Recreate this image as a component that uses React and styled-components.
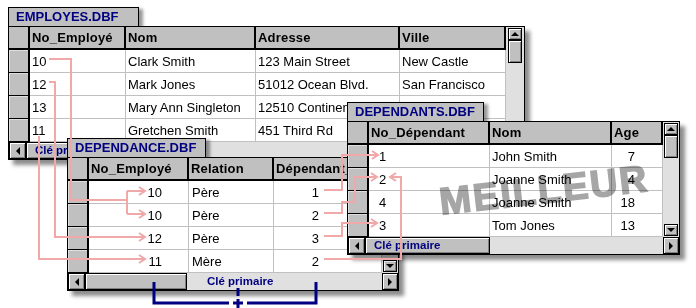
import React from 'react'
import styled, { createGlobalStyle } from 'styled-components'

const GlobalStyle = createGlobalStyle`
  *, *::before, *::after { box-sizing: border-box; }
  html, body { margin: 0; padding: 0; background: #fff; }
  body { font-family: "Liberation Sans", Arial, sans-serif; color: #000; }
`;

const Desk = styled.div`
  position: relative;
  width: 696px;
  height: 308px;
  overflow: hidden;
  background: #fff;
`;

const Win = styled.div`
  position: absolute;
  left: ${p => p.$x}px;
  top: ${p => p.$y}px;
  width: ${p => p.$w}px;
`;

const Tab = styled.div`
  width: ${p => p.$w}px;
  height: 19px;
  border: 1px solid #000;
  border-bottom: none;
  background: #c0c0c0;
  color: #000080;
  font-weight: bold;
  font-size: 13px;
  line-height: 18px;
  padding-left: 7px;
  white-space: nowrap;
  box-shadow: 4px 2px 3px rgba(0, 0, 0, 0.4);
`;

const Body = styled.div`
  position: relative;
  display: grid;
  grid-template-columns: ${p => p.$cols};
  grid-template-rows: repeat(5, 23px) 17px;
  border: 1px solid #000;
  background: #c0c0c0;
  box-shadow: 5px 5px 4px rgba(0, 0, 0, 0.45);
`;

const Corner = styled.div`
  background: #c0c0c0;
  border-right: 2px solid #000;
  border-bottom: 2px solid #000;
`;

const HeadCell = styled.div`
  display: flex;
  align-items: center;
  padding-left: 2px;
  background: #c0c0c0;
  border-right: 2px solid #000;
  border-bottom: 2px solid #000;
  font-weight: bold;
  font-size: 13px;
  letter-spacing: 0.2px;
  white-space: nowrap;
  overflow: hidden;
`;

const Selector = styled.div`
  background: #c0c0c0;
  border-right: 2px solid #000;
  border-bottom: 1px solid #000;
  box-shadow: inset 1px 1px 0 #dedede;
`;

const Cell = styled.div`
  display: flex;
  align-items: center;
  justify-content: ${p => (p.$right ? 'flex-end' : 'flex-start')};
  padding: ${p => (p.$right ? `0 ${p.$pad}px 0 0` : `0 0 0 ${p.$pad}px`)};
  background: #fff;
  border-right: 1px solid #c0c0c0;
  border-bottom: 1px solid #c0c0c0;
  font-size: 13px;
  white-space: nowrap;
  overflow: hidden;
`;

const VScroll = styled.div`
  grid-column: -2 / -1;
  grid-row: 1 / 6;
  display: flex;
  flex-direction: column;
  align-items: center;
  padding: 1px 0;
  background: #e0e0e0;
`;

const HScroll = styled.div`
  grid-column: 1 / -1;
  grid-row: 6;
  display: flex;
  align-items: stretch;
  background: #e0e0e0;
`;

const raised = `
  background: #c0c0c0;
  border: 1px solid #000;
  box-shadow: inset 1px 1px 0 #fff, inset -1px -1px 0 #808080;
`;

const tri = {
  up: 'border-left: 4px solid transparent; border-right: 4px solid transparent; border-bottom: 4px solid #000;',
  down: 'border-left: 4px solid transparent; border-right: 4px solid transparent; border-top: 4px solid #000;',
  left: 'border-top: 4px solid transparent; border-bottom: 4px solid transparent; border-right: 4px solid #000;',
  right: 'border-top: 4px solid transparent; border-bottom: 4px solid transparent; border-left: 4px solid #000;',
};

const ArrowBtn = styled.div`
  ${raised}
  flex: none;
  width: ${p => p.$w}px;
  height: ${p => p.$h}px;
  display: flex;
  align-items: center;
  justify-content: center;
  &::after {
    content: '';
    width: 0;
    height: 0;
    ${p => tri[p.$dir]}
  }
`;

const Thumb = styled.div`
  ${raised}
  flex: none;
  width: ${p => p.$w}px;
  height: ${p => p.$h}px;
`;

const Track = styled.div`
  flex: 1;
`;

const KeyBtn = styled.div`
  ${raised}
  flex: none;
  width: ${p => p.$w}px;
  padding-left: 8px;
  color: #000080;
  font-weight: bold;
  font-size: 11.5px;
  line-height: 15px;
  white-space: nowrap;
  overflow: hidden;
`;

const TrackLabel = styled.div`
  margin-left: ${p => p.$gap}px;
  color: #000080;
  font-weight: bold;
  font-size: 11.5px;
  line-height: 16px;
  white-space: nowrap;
`;

const Watermark = styled.div`
  position: absolute;
  left: 544px;
  top: 190px;
  transform: translate(-50%, -50%) rotate(-6.5deg);
  font-size: 38px;
  font-weight: bold;
  letter-spacing: 2px;
  line-height: 1;
  color: #a6a6a6;
  -webkit-text-stroke: 1.5px #a6a6a6;
  mix-blend-mode: multiply;
  white-space: nowrap;
  pointer-events: none;
`;

const Overlay = styled.svg`
  position: absolute;
  left: 0;
  top: 0;
  pointer-events: none;
`;

const tables = [
  {
    name: 'EMPLOYES.DBF', x: 8, y: 7, w: 517, tab: 131,
    cols: '21px 96px 130px 144px 106px 18px',
    heads: ['No_Employé', 'Nom', 'Adresse', 'Ville'],
    align: [[false, 2], [false, 2], [false, 2], [false, 2]],
    rows: [
      ['10', 'Clark Smith', '123 Main Street', 'New Castle'],
      ['12', 'Mark Jones', '51012 Ocean Blvd.', 'San Francisco'],
      ['13', 'Mary Ann Singleton', '12510 Continental Dr.', 'Washington'],
      ['11', 'Gretchen Smith', '451 Third Rd', 'Boston'],
    ],
    vs: { w: 14, up: 12, thumb: 23 },
    hs: 'key', right: 18,
  },
  {
    name: 'DEPENDANCE.DBF', x: 67, y: 138, w: 332, tab: 139,
    cols: '21px 100px 85px 108px 16px',
    heads: ['No_Employé', 'Relation', 'Dépendant_No'],
    align: [[true, 26], [false, 3], [true, 62]],
    rows: [
      ['10', 'Père', '1'],
      ['10', 'Père', '2'],
      ['12', 'Père', '3'],
      ['11', 'Mère', '2'],
    ],
    vs: { w: 14, up: 12, thumb: 23 },
    hs: 'thumb', right: 16,
  },
  {
    name: 'DEPENDANTS.DBF', x: 347, y: 102, w: 333, tab: 137,
    cols: '21px 121px 122px 51px 16px',
    heads: ['No_Dépendant', 'Nom', 'Age'],
    align: [[false, 10], [false, 2], [true, 27]],
    rows: [
      ['1', 'John Smith', '7'],
      ['2', 'Joanne Smith', '4'],
      ['4', 'Joanne Smith', '18'],
      ['3', 'Tom Jones', '13'],
    ],
    vs: { w: 14, up: 12, thumb: 23 },
    hs: 'key', right: 16,
  },
];

const Table = ({ t }) => (
  <Win $x={t.x} $y={t.y} $w={t.w}>
    <Tab $w={t.tab}>{t.name}</Tab>
    <Body $cols={t.cols}>
      <Corner />
      {t.heads.map(h => <HeadCell key={h}>{h}</HeadCell>)}
      {t.rows.map((r, i) => (
        <React.Fragment key={i}>
          <Selector />
          {r.map((v, j) => (
            <Cell key={j} $right={t.align[j][0]} $pad={t.align[j][1]}>{v}</Cell>
          ))}
        </React.Fragment>
      ))}
      <VScroll>
        <ArrowBtn $dir="up" $w={t.vs.w} $h={t.vs.up} />
        <Thumb $w={t.vs.w} $h={t.vs.thumb} />
        <Track />
        <ArrowBtn $dir="down" $w={t.vs.w} $h={t.vs.up} />
      </VScroll>
      <HScroll>
        <ArrowBtn $dir="left" $w={17} $h={17} />
        {t.hs === 'key' ? (
          <KeyBtn $w={125}>Clé primaire</KeyBtn>
        ) : (
          <>
            <Thumb $w={102} $h={17} />
            <TrackLabel $gap={20}>Clé primaire</TrackLabel>
          </>
        )}
        <Track />
        <ArrowBtn $dir="right" $w={t.right} $h={17} />
      </HScroll>
    </Body>
  </Win>
);

const links = [
  'M49,59 H71 V200 H127 M127,191 V214 M127,191 H145 M127,214 H145',
  'M49,82 H55 V237 H145',
  'M39,136 V259 H145',
  'M324,190 H342 V155 H378',
  'M324,213 H342 V202 H355 V177 H377',
  'M324,236 H342 V223 H377',
  'M324,259 H401 V177 H390',
];

const heads = [
  [145, 191, 1], [145, 214, 1], [145, 237, 1], [145, 259, 1],
  [378, 155, 1], [377, 177, 1], [377, 223, 1], [390, 177, -1],
];

const Links = () => (
  <Overlay width="696" height="308" viewBox="0 0 696 308">
    <g fill="none" stroke="#f0a8a8" strokeWidth="2">
      {links.map((d, i) => <path key={i} d={d} />)}
      {heads.map(([x, y, s], i) => (
        <path key={'a' + i} d={`M${x - 6 * s},${y - 4} L${x},${y} L${x - 6 * s},${y + 4}`} />
      ))}
    </g>
    <g fill="none" stroke="#000080" strokeWidth="3">
      <path d="M154,282 V303 H229 M247,303 H316 V282" />
      <path d="M238,288 V296 M238,299 V308 M233,303 H243" />
    </g>
  </Overlay>
);

const App = () => (
  <Desk>
    <GlobalStyle />
    {tables.map(t => <Table key={t.name} t={t} />)}
    <Watermark>MEILLEUR</Watermark>
    <Links />
  </Desk>
);

export default App
